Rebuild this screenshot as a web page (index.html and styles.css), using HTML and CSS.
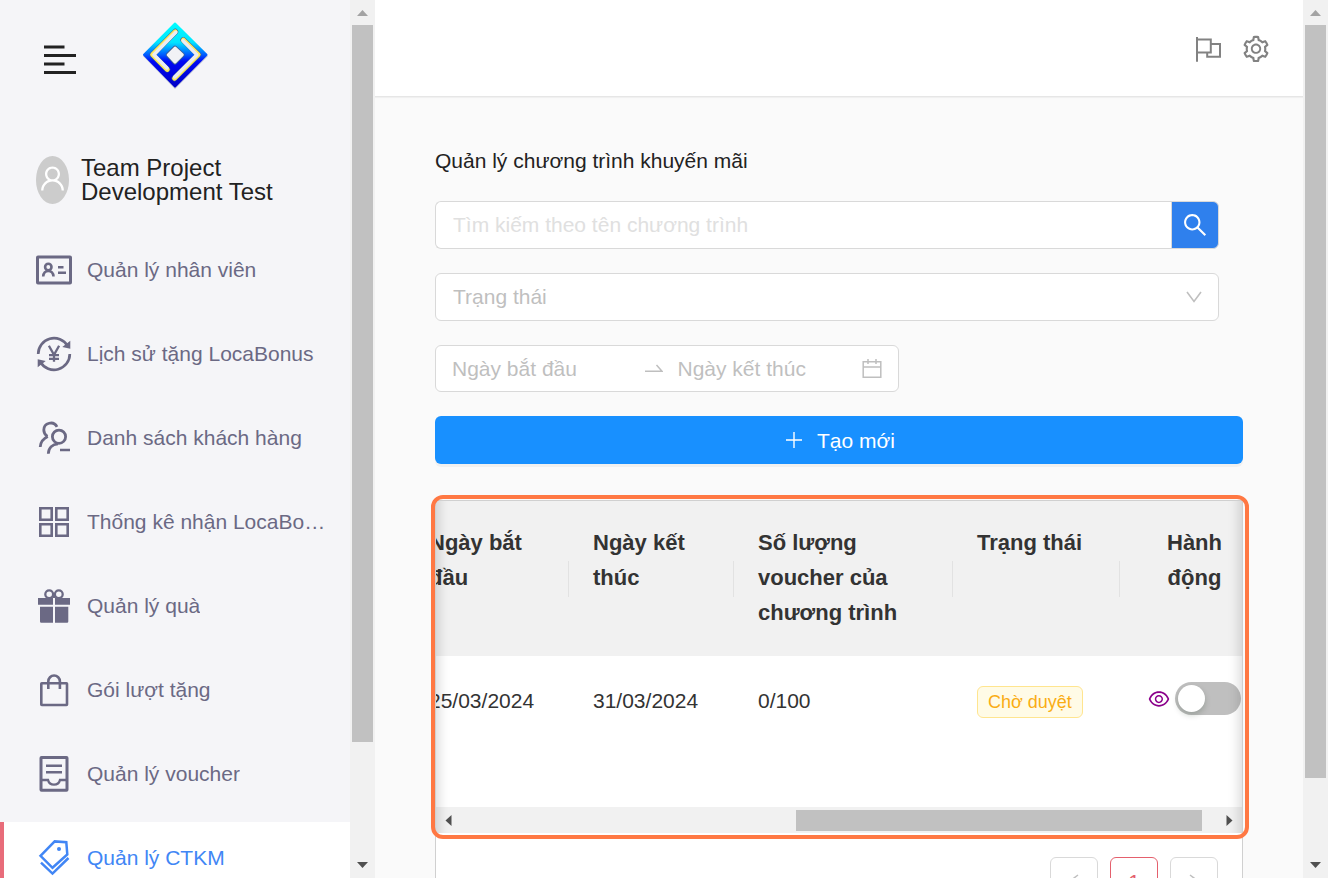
FILE: index.html
```html
<!DOCTYPE html>
<html lang="vi">
<head>
<meta charset="utf-8">
<meta name="viewport" content="width=device-width, initial-scale=1">
<title>Quản lý chương trình khuyến mãi</title>
<link rel="stylesheet" href="styles.css">
</head>
<body>
<div class="app">
  <aside class="sidebar">
    <div class="sidebar-top">
      <button class="menu-toggle" type="button" aria-label="Menu">
        <svg width="32" height="30" viewBox="0 0 32 30"><path d="M0 2h20.500M0 10.500h32M0 19h20.500M0 27.500h32" stroke="#222" stroke-width="3"/></svg>
      </button>
      <a class="logo" href="#" aria-label="Trang chủ">
        <svg width="68" height="68" viewBox="0 0 68 68">
          <defs>
            <linearGradient id="logo-fill" x1="0" y1="0" x2="0" y2="1">
              <stop offset="0" stop-color="#00fcff"/><stop offset=".3" stop-color="#00e4ff"/><stop offset=".5" stop-color="#0058ff"/><stop offset=".6" stop-color="#0008f5"/><stop offset="1" stop-color="#0000c8"/>
            </linearGradient>
            <linearGradient id="core-fill" x1="0" y1="0" x2="0" y2="1">
              <stop offset="0" stop-color="#00e4ff"/><stop offset=".35" stop-color="#0030ff"/><stop offset="1" stop-color="#0000ff"/>
            </linearGradient>
          </defs>
          <path d="M33 3L66 34 33 67 1 34z" fill="#9aa4b8" opacity=".6"/>
          <path d="M33 1.500L64.500 32.700 33 64.500 2 32.700z" fill="url(#logo-fill)" stroke="url(#logo-fill)" stroke-width="2" stroke-linejoin="round"/>
          <g fill="none" stroke-linecap="round" stroke-linejoin="round">
            <path d="M33.300 9.700L10.500 32.700 25.300 47.500M41.300 18L56.300 32.700 32.500 56.300" stroke="#3a5f96" stroke-width="5.800"/>
            <path d="M33.300 9.700L10.500 32.700 25.300 47.500M41.300 18L56.300 32.700 32.500 56.300" stroke="#ffe95e" stroke-width="4.600"/>
            <path d="M33.900 10.300L11.900 32.700 25 46M41 18.800L54.900 32.700 32.600 55" stroke="#e9ecf4" stroke-width="3.400"/>
          </g>
          <path d="M33 25.800L40.500 32.800 33 40.400 26 32.800z" fill="#f1f2f5" stroke="#3a5f96" stroke-width="4.400" stroke-linejoin="round"/>
          <path d="M33 25.800L40.500 32.800 33 40.400 26 32.800z" fill="#f1f2f5" stroke="#f1f2f5" stroke-width="2.600" stroke-linejoin="round"/>
        </svg>
      </a>
    </div>
    <div class="profile">
      <span class="avatar">
        <svg width="31" height="31" viewBox="0 0 1024 1024" fill="#fff"><path d="M858.500 763.600a374 374 0 00-80.600-119.500 375.630 375.630 0 00-119.500-80.600c-.4-.2-.8-.3-1.200-.5C719.500 518 760 444.700 760 362c0-137-111-248-248-248S264 225 264 362c0 82.700 40.500 156 102.800 201.100-.4.2-.8.3-1.200.5-44.800 18.900-85 46-119.500 80.600a375.630 375.630 0 00-80.600 119.500A371.700 371.700 0 00136 901.800a8 8 0 008 8.200h60c4.400 0 7.900-3.500 8-7.800 2-77.200 33-149.500 87.800-204.300 56.700-56.700 132-87.900 212.200-87.900s155.500 31.200 212.200 87.900C779 752.700 810 825 812 902.200c.1 4.400 3.600 7.800 8 7.800h60a8 8 0 008-8.200c-1-47.800-10.900-94.300-29.500-138.200zM512 534c-45.900 0-89.100-17.900-121.600-50.400S340 407.900 340 362c0-45.900 17.900-89.100 50.400-121.600S466.100 190 512 190s89.100 17.900 121.600 50.400S684 316.100 684 362c0 45.900-17.900 89.100-50.400 121.600S557.900 534 512 534z"/></svg>
      </span>
      <span class="profile-name">Team Project Development Test</span>
    </div>
    <nav class="menu">
      <a class="menu-item" href="#">
        <svg class="menu-icon" viewBox="0 0 36 36"><rect x="1.500" y="5" width="33" height="26" rx=".5" stroke-width="3"/><circle cx="12.300" cy="15" r="3.200" stroke-width="2.600"/><path d="M7.200 24.500c.3-3.600 2.500-5.500 5.100-5.500s4.900 1.900 5.200 5.500" stroke-width="2.600"/><path d="M22 15.200h5.500M22 20.800h8" stroke-width="2.400"/></svg>
        <span class="menu-label">Quản lý nhân viên</span></a>
      <a class="menu-item" href="#">
        <svg class="menu-icon" viewBox="0 0 36 36"><path d="M2.200 18A15.800 15.800 0 0 1 31.500 9.800M33.800 18A15.800 15.800 0 0 1 4.500 26.200" stroke-width="2.700"/><path d="M34.300 4.800v8l-8-1.800zM1.700 31.200v-8l8 1.800z" fill="currentColor" stroke="none"/><path d="M12.900 9.800l5.100 9 5.100-9M18 18.500v7.300M13 19.200h10M13 22.800h10" stroke-width="2.300"/></svg>
        <span class="menu-label">Lịch sử tặng LocaBonus</span></a>
      <a class="menu-item" href="#">
        <svg class="menu-icon" viewBox="0 0 36 36" stroke-width="2.800"><circle cx="23" cy="16.700" r="6.600"/><path d="M12.300 33.800c.2-5.800 4.200-9.600 9.700-10"/><path d="M21 6.800A7 7 0 0 0 7.800 10c0 2.700 1.200 4.700 3.600 6.300"/><path d="M4.200 27c.3-4.600 2.900-8.300 7.600-10.500"/><path d="M24 30h10" stroke-width="2.500"/></svg>
        <span class="menu-label">Danh sách khách hàng</span></a>
      <a class="menu-item" href="#">
        <svg class="menu-icon" viewBox="0 0 36 36" stroke-width="2.600"><path d="M4.300 4.300h11.400v11.400H4.300zM20.300 4.300h11.400v11.400H20.300zM4.300 20.300h11.400v11.400H4.300zM20.300 20.300h11.400v11.400H20.300z"/></svg>
        <span class="menu-label">Thống kê nhận LocaBonus</span></a>
      <a class="menu-item" href="#">
        <svg class="menu-icon" viewBox="0 0 36 36"><circle cx="13.200" cy="6.200" r="3.900" stroke-width="2.300"/><circle cx="22.800" cy="6.200" r="3.900" stroke-width="2.300"/><path d="M2 10h15v6.700H2zM19 10h15v6.700H19zM4 18.700h13v16H5.200a1.200 1.200 0 0 1-1.200-1.200zM19 18.700h13.300v14.800a1.200 1.200 0 0 1-1.200 1.200H19zM16.500 6h3v4h-3z" fill="currentColor" stroke="none"/></svg>
        <span class="menu-label">Quản lý quà</span></a>
      <a class="menu-item" href="#">
        <svg class="menu-icon" viewBox="0 0 36 36" stroke-width="2.600"><rect x="5.300" y="11.300" width="25.700" height="21.700" rx=".5"/><path d="M12.300 17V9.500a5.700 5.900 0 0 1 11.600 0V17"/></svg>
        <span class="menu-label">Gói lượt tặng</span></a>
      <a class="menu-item" href="#">
        <svg class="menu-icon" viewBox="0 0 36 36" stroke-width="3"><rect x="5" y="1.600" width="26" height="32.700" rx=".5"/><path d="M10 9.700h16M10 16.200h16" stroke-width="2.400"/><path d="M5 24h7a6.200 6.200 0 0 0 12 0h7" stroke-width="2.400"/></svg>
        <span class="menu-label">Quản lý voucher</span></a>
      <a class="menu-item active" href="#" aria-current="page">
        <svg class="menu-icon" viewBox="0 0 36 36" stroke-width="2.500"><path d="M4.500 15.800L18.700 1.400l11.600.8 1 12.200L16.500 27.800z"/><path d="M5 22.600l11.500 11L32.500 18"/><circle cx="23" cy="9" r="2" fill="currentColor" stroke="none"/></svg>
        <span class="menu-label">Quản lý CTKM</span></a>
    </nav>
  </aside>
  <div class="scrollbar side-bar" aria-hidden="true">
    <svg class="arrow" viewBox="0 0 25 25"><path d="M7 16l5.500-6 5.500 6z" fill="#a3a3a3"/></svg>
    <div class="track"><span class="thumb"></span><span class="rest"></span></div>
    <svg class="arrow" viewBox="0 0 25 25"><path d="M7 9l5.500 6 5.500-6z" fill="#505050"/></svg>
  </div>

  <div class="page">
    <header class="topbar">
      <button class="icon-button" type="button" aria-label="Ngôn ngữ">
        <svg width="30" height="30" viewBox="0 0 30 30" fill="none" stroke="currentColor" stroke-width="2"><path d="M4 3v24.700M4 5.500h13.800v13H4M17.800 10h9.200v12.700H14.200v-4.200"/></svg>
      </button>
      <button class="icon-button" type="button" aria-label="Cài đặt">
        <svg width="30" height="30" viewBox="0 0 1024 1024" fill="currentColor"><path d="M924.800 625.700l-65.500-56c3.100-19 4.700-38.400 4.700-57.800s-1.600-38.800-4.700-57.800l65.500-56a32.030 32.030 0 009.300-35.200l-.9-2.600a443.740 443.740 0 00-79.700-137.900l-1.800-2.100a32.120 32.120 0 00-35.100-9.500l-81.300 28.900c-30-24.600-63.500-44-99.700-57.600l-15.700-85a32.050 32.050 0 00-25.800-25.700l-2.700-.5c-52.100-9.400-106.900-9.400-159 0l-2.700.5a32.050 32.050 0 00-25.800 25.700l-15.800 85.400a351.860 351.860 0 00-99 57.400l-81.900-29.100a32 32 0 00-35.100 9.500l-1.800 2.100a446.020 446.020 0 00-79.700 137.900l-.9 2.600c-4.500 12.500-.8 26.500 9.300 35.200l66.300 56.600c-3.100 18.800-4.600 38-4.600 57.100 0 19.200 1.500 38.400 4.600 57.100L99 625.500a32.030 32.030 0 00-9.300 35.200l.9 2.600c18.100 50.400 44.900 96.900 79.700 137.900l1.800 2.100a32.120 32.120 0 0035.100 9.500l81.900-29.100c29.800 24.500 63.100 43.900 99 57.400l15.800 85.400a32.050 32.050 0 0025.800 25.700l2.700.5a449.400 449.400 0 00159 0l2.700-.5a32.050 32.050 0 0025.800-25.700l15.700-85a350 350 0 0099.700-57.600l81.300 28.900a32 32 0 0035.100-9.500l1.800-2.100c34.800-41.100 61.600-87.500 79.700-137.900l.9-2.600c4.500-12.300.8-26.300-9.300-35zM788.300 465.900c2.500 15.100 3.800 30.600 3.800 46.100s-1.300 31-3.800 46.100l-6.600 40.100 74.700 63.900a370.030 370.030 0 01-42.600 73.600L721 702.800l-31.400 25.800c-23.900 19.600-50.500 35-79.300 45.800l-38.100 14.300-17.900 97a377.500 377.500 0 01-85 0l-17.900-97.200-37.800-14.500c-28.500-10.800-55-26.200-78.700-45.700l-31.400-25.900-93.400 33.200c-17-22.900-31.200-47.600-42.600-73.600l75.500-64.500-6.500-40c-2.400-14.900-3.700-30.300-3.700-45.500 0-15.300 1.200-30.600 3.700-45.500l6.500-40-75.500-64.500c11.300-26.100 25.600-50.700 42.600-73.600l93.400 33.200 31.400-25.900c23.700-19.500 50.200-34.900 78.700-45.700l37.900-14.300 17.900-97.200c28.100-3.200 56.800-3.200 85 0l17.900 97 38.100 14.300c28.700 10.800 55.400 26.200 79.300 45.800l31.400 25.800 92.800-32.900c17 22.900 31.200 47.600 42.600 73.600L781.800 426l6.500 39.900zM512 326c-97.200 0-176 78.800-176 176s78.800 176 176 176 176-78.800 176-176-78.800-176-176-176zm79.200 255.200A111.600 111.600 0 01512 614c-29.900 0-58-11.700-79.200-32.800A111.600 111.600 0 01400 502c0-29.900 11.700-58 32.800-79.200C454 401.600 482.100 390 512 390c29.900 0 58 11.600 79.200 32.800A111.600 111.600 0 01624 502c0 29.900-11.700 58-32.800 79.200z"/></svg>
      </button>
    </header>
    <main class="content">
      <h1 class="title">Quản lý chương trình khuyến mãi</h1>
      <form class="search" role="search">
        <input class="search-input" type="text" placeholder="Tìm kiếm theo tên chương trình" aria-label="Tìm kiếm theo tên chương trình">
        <button class="search-button" type="button" aria-label="Tìm kiếm">
          <svg width="28" height="28" viewBox="0 0 1024 1024" fill="#fff"><path d="M909.600 854.500L649.900 594.800C690.200 542.700 712 479 712 412c0-80.200-31.300-155.400-87.900-212.100-56.600-56.700-132-87.900-212.100-87.900s-155.500 31.300-212.100 87.900C143.200 256.500 112 331.800 112 412c0 80.100 31.300 155.500 87.900 212.100C256.500 680.800 331.800 712 412 712c67 0 130.600-21.800 182.700-62l259.700 259.600a8.200 8.200 0 0011.600 0l43.600-43.500a8.200 8.200 0 000-11.600zM570.400 570.400C528 612.700 471.800 636 412 636s-116-23.300-158.400-65.600C211.300 528 188 471.800 188 412s23.300-116.100 65.600-158.400C296 211.300 352.200 188 412 188s116.100 23.200 158.400 65.600S636 352.200 636 412s-23.300 116.100-65.600 158.400z"/></svg>
        </button>
      </form>
      <div class="select-box">
        <select class="select" aria-label="Trạng thái"><option>Trạng thái</option></select>
        <svg class="select-arrow" width="16" height="12" viewBox="0 0 16 12"><path d="M1 1l7 9.500L15 1" fill="none" stroke="#bfbfbf" stroke-width="1.600"/></svg>
      </div>
      <div class="range">
        <input class="range-input" type="text" placeholder="Ngày bắt đầu" aria-label="Ngày bắt đầu">
        <svg class="range-arrow" width="18" height="9" viewBox="0 0 18 9"><path d="M0 7.200h17L11.500 1" fill="none" stroke="#bfbfbf" stroke-width="1.500"/></svg>
        <input class="range-input" type="text" placeholder="Ngày kết thúc" aria-label="Ngày kết thúc">
        <svg class="range-calendar" width="20" height="20" viewBox="0 0 20 20"><path d="M1.200 2.700h17.600v15.600H1.200zM1.200 8h17.600M6 0v5M14 0v5" fill="none" stroke="#bfbfbf" stroke-width="1.500"/></svg>
      </div>
      <button class="create" type="button">
        <svg width="18" height="18" viewBox="0 0 18 18"><path d="M9 1v16M1 9h16" stroke="#fff" stroke-width="1.400"/></svg>
        <span>Tạo mới</span>
      </button>

      <section class="card">
        <div class="table-frame">
          <div class="table-view">
            <table class="table">
              <colgroup><col class="c-start"><col class="c-end"><col class="c-count"><col class="c-state"><col class="c-action"></colgroup>
              <thead><tr>
                <th scope="col">Ngày bắt đầu</th>
                <th scope="col">Ngày kết thúc</th>
                <th scope="col">Số lượng voucher của chương trình</th>
                <th scope="col">Trạng thái</th>
                <th scope="col" class="cell-action">Hành<br>động</th>
              </tr></thead>
              <tbody><tr>
                <td>25/03/2024</td>
                <td>31/03/2024</td>
                <td>0/100</td>
                <td><span class="tag">Chờ duyệt</span></td>
                <td class="cell-action">
                  <div class="actions">
                    <button class="view" type="button" aria-label="Xem"><svg width="24" height="24" viewBox="0 0 1024 1024" fill="currentColor"><path d="M942.200 486.200C847.400 286.500 704.100 186 512 186c-192.200 0-335.400 100.500-430.200 300.300a60.300 60.300 0 000 51.500C176.600 737.500 319.900 838 512 838c192.200 0 335.400-100.500 430.200-300.300 7.700-16.200 7.700-35 0-51.500zM512 766c-161.300 0-279.400-81.800-362.700-254C232.600 339.800 350.700 258 512 258c161.300 0 279.400 81.800 362.700 254C791.500 684.200 673.400 766 512 766zm-4-430c-97.200 0-176 78.800-176 176s78.800 176 176 176 176-78.800 176-176-78.800-176-176-176zm0 288c-61.900 0-112-50.100-112-112s50.100-112 112-112 112 50.100 112 112-50.100 112-112 112z"/></svg></button>
                    <input class="switch" type="checkbox" role="switch" aria-label="Kích hoạt">
                  </div>
                </td>
              </tr></tbody>
            </table>
          </div>
          <div class="h-scroll" aria-hidden="true">
            <svg class="h-arrow" viewBox="0 0 25 26"><path d="M15.500 8v11l-6-5.500z" fill="#505050"/></svg>
            <div class="h-track"><span class="h-rest"></span><span class="h-thumb"></span><span class="h-end"></span></div>
            <svg class="h-arrow" viewBox="0 0 25 26"><path d="M9.500 8v11l6-5.500z" fill="#505050"/></svg>
          </div>
          <div class="edge edge-left"></div>
          <div class="edge edge-right"></div>
          <div class="highlight"></div>
        </div>
        <nav class="pager" aria-label="Phân trang">
          <button class="pager-button" type="button" aria-label="Trang trước"><svg width="12" height="16" viewBox="0 0 12 16"><path d="M10 2L2 8l8 6" fill="none" stroke="#bfbfbf" stroke-width="1.500"/></svg></button>
          <button class="pager-button current" type="button">1</button>
          <button class="pager-button" type="button" aria-label="Trang sau"><svg width="12" height="16" viewBox="0 0 12 16"><path d="M2 2l8 6-8 6" fill="none" stroke="#bfbfbf" stroke-width="1.500"/></svg></button>
        </nav>
      </section>
    </main>
  </div>
  <div class="scrollbar page-bar" aria-hidden="true">
    <svg class="arrow" viewBox="0 0 25 25"><path d="M7 16l5.500-6 5.500 6z" fill="#a3a3a3"/></svg>
    <div class="track"><span class="thumb"></span><span class="rest"></span></div>
    <svg class="arrow" viewBox="0 0 25 25"><path d="M7 9l5.500 6 5.500-6z" fill="#505050"/></svg>
  </div>
</div>
</body>
</html>
```
FILE: styles.css
```css
*, *::before, *::after { box-sizing: border-box; }

body {
  margin: 0;
  font-family: "Liberation Sans", Arial, sans-serif;
  font-size: 21px;
  line-height: 33px;
  color: #222;
  background: #fafafa;
}

button, input, select { font: inherit; color: inherit; margin: 0; }
button { padding: 0; border: 0; background: none; cursor: pointer; }
svg { display: block; flex: none; }

.app { display: flex; height: 100vh; overflow: hidden; }

/* Sidebar */
.sidebar { flex: 0 0 350px; overflow: hidden; background: #f5f5f8; }
.sidebar-top { display: flex; align-items: flex-end; gap: 66px; padding: 22px 44px 0; }
.menu-toggle { display: flex; align-items: center; height: 60px; }
.profile { display: flex; gap: 12px; margin-top: 66px; padding: 0 36px; }
.avatar {
  display: flex; align-items: center; justify-content: center;
  flex: 0 0 33px; height: 48px; padding-bottom: 3px; border-radius: 50%; background: #ccc; overflow: hidden;
}
.profile-name { width: 210px; font-size: 24px; line-height: 24px; }
.menu { display: flex; flex-direction: column; gap: 12px; margin-top: 30px; }
.menu-item {
  display: flex; align-items: center; gap: 15px; height: 72px; flex: none;
  padding: 0 24px 0 36px; color: #6b6984; text-decoration: none;
}
.menu-icon { width: 36px; height: 36px; fill: none; stroke: currentColor; }
.menu-label { padding-bottom: 2px; overflow: hidden; white-space: nowrap; text-overflow: ellipsis; }
.menu-item.active { background: #fff; color: #4186f5; box-shadow: inset 4px 0 #e86c7a; }

/* Vertical scrollbars */
.scrollbar { display: flex; flex-direction: column; flex: 0 0 25px; background: #f1f1f1; }
.arrow { width: 25px; height: 25px; }
.track { display: flex; flex-direction: column; flex: 1; padding: 0 2px; }
.thumb { background: #c1c1c1; }
.side-bar .thumb { flex: 717; }
.side-bar .rest { flex: 111; }
.page-bar .thumb { flex: 753; }
.page-bar .rest { flex: 75; }

/* Page */
.page { display: flex; flex-direction: column; flex: 1; min-width: 0; overflow: hidden; }
.topbar {
  display: flex; align-items: center; justify-content: flex-end; gap: 18px;
  flex: 0 0 97px; padding: 1px 32px 0 0; background: #fff;
  border-bottom: 1px solid #e6e6e6; box-shadow: 0 1px 1px #f0f0f0;
}
.icon-button { color: #828282; }
.content { display: flex; flex-direction: column; gap: 24px; padding: 48px 60px 0; }
.title { margin: 0; font-size: 21px; font-weight: 400; line-height: 32px; }

.search { display: flex; width: 97%; height: 48px; flex: none; }
.search-input {
  flex: 1; min-width: 0; padding: 0 17px 2px; background: #fff;
  border: 1px solid #d9d9d9; border-right: 0; border-radius: 6px 0 0 6px;
}
.search-input::placeholder { color: #e0e0e0; opacity: 1; }
.search-button {
  display: flex; align-items: center; justify-content: center; width: 48px;
  border: 1px solid #d9d9d9; border-radius: 0 6px 6px 0; background: #2f80ed;
}

.select-box { position: relative; width: 97%; height: 48px; flex: none; }
.select {
  width: 100%; height: 100%; padding: 0 17px 2px; appearance: none;
  border: 1px solid #d9d9d9; border-radius: 6px; background: #fff; color: #bfbfbf;
}
.select-arrow { position: absolute; right: 17px; top: 18px; pointer-events: none; }

.range {
  display: flex; align-items: center; width: 464px; height: 47px; flex: none;
  padding: 0 16px; border: 1px solid #d9d9d9; border-radius: 6px; background: #fff;
}
.range-input { flex: 1; min-width: 0; padding: 0; border: 0; background: none; }
.range-input::placeholder { color: #bfbfbf; opacity: 1; }
.range-arrow { margin: 0 15px 0 12px; }
.range-calendar { margin-left: 4px; }

.create {
  display: flex; align-items: center; justify-content: center; gap: 14px;
  height: 48px; flex: none; padding-left: 2px; border-radius: 6px; background: #1890ff; color: #fff;
  box-shadow: 0 3px 0 rgba(0, 0, 0, .04);
}

/* Table card */
.card { margin-top: 12px; border: 1px solid #d0d0d0; background: #fff; }
.table-frame { position: relative; }
.table-view { display: flex; justify-content: center; overflow: hidden; }
.table { flex: none; width: 868px; table-layout: fixed; border-collapse: collapse; color: #333; }
.c-start { width: 164px; }
.c-end { width: 165px; }
.c-count { width: 219px; }
.c-state { width: 167px; }
.c-action { width: 153px; }
.table th {
  height: 155px; padding: 24px; vertical-align: top; text-align: left;
  font-size: 22px; font-weight: 700; line-height: 35px;
  background: linear-gradient(#e2e2e2, #e2e2e2) right center / 1px 36px no-repeat #f1f1f1;
}
.table td { height: 151px; padding: 28px 24px; vertical-align: top; }
.table .cell-action { padding-right: 28px; text-align: center; background-size: 0 0; }
.table td.cell-action { padding: 26px 5px 0 0; }
.tag {
  display: inline-block; padding: 0 10px; border: 1px solid #ffe58f; border-radius: 6px;
  background: #fffbe6; color: #faad14; font-size: 18px; line-height: 30px;
}
.actions { display: flex; align-items: center; justify-content: center; gap: 4px; }
.view { color: #8b008b; }
.switch {
  appearance: none; width: 66px; height: 33px; padding: 3px;
  border-radius: 17px; background: #bfbfbf;
}
.switch::before {
  content: ""; display: block; width: 27px; height: 27px; border-radius: 50%;
  background: #fff; box-shadow: 0 3px 6px rgba(0, 35, 11, .2);
}
.switch:checked::before { margin-left: auto; }

.h-scroll { display: flex; height: 26px; background: #f1f1f1; }
.h-arrow { width: 25px; height: 26px; }
.h-track { display: flex; flex: 1; padding: 3px 0 2px; }
.h-rest { flex: 335; }
.h-thumb { flex: 406; background: #c1c1c1; }
.h-end { flex: 15; }

.edge { position: absolute; top: 0; bottom: 0; width: 30px; pointer-events: none; }
.edge-left { left: 0; box-shadow: inset 15px 0 12px -12px rgba(0, 0, 0, .15); }
.edge-right { right: 0; box-shadow: inset -15px 0 12px -12px rgba(0, 0, 0, .15); }
.highlight {
  position: absolute; top: -6px; right: -7px; bottom: -6px; left: -5px;
  border: 4px solid #ff7843; border-radius: 12px; pointer-events: none;
}

.pager { display: flex; justify-content: flex-end; gap: 12px; padding: 24px; }
.pager-button {
  display: flex; align-items: center; justify-content: center;
  width: 48px; height: 48px; border: 1px solid #d9d9d9; border-radius: 6px; background: #fff;
}
.pager-button.current { border-color: #e4606d; color: #e4606d; }
```
